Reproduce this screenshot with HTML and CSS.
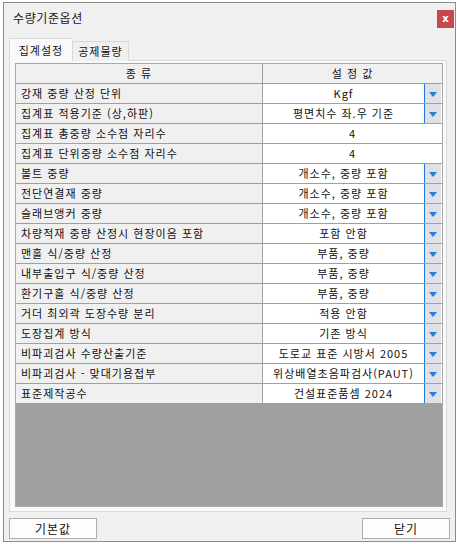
FILE: index.html
```html
<!DOCTYPE html>
<html lang="ko">
<head>
<meta charset="utf-8">
<title>수량기준옵션</title>
<link rel="stylesheet" href="styles.css">
</head>
<body>
<div class="window">
  <div class="titlebar">
    <span class="title">수량기준옵션</span>
    <div class="close">x</div>
  </div>
  <div class="tabs">
    <div class="tab active">집계설정</div>
    <div class="tab">공제물량</div>
  </div>
  <div class="panel">
    <div class="grid">
      <div class="row head"><div class="c1">종 류</div><div class="c2">설 정 값</div></div>
      <div class="row"><div class="c1">강재 중량 산정 단위</div><div class="c2"><span class="val">Kgf</span><span class="dd"><i></i></span></div></div>
      <div class="row"><div class="c1">집계표 적용기준 (상,하판)</div><div class="c2"><span class="val">평면치수 좌.우 기준</span><span class="dd"><i></i></span></div></div>
      <div class="row"><div class="c1">집계표 총중량 소수점 자리수</div><div class="c2"><span class="val">4</span></div></div>
      <div class="row"><div class="c1">집계표 단위중량 소수점 자리수</div><div class="c2"><span class="val">4</span></div></div>
      <div class="row"><div class="c1">볼트 중량</div><div class="c2"><span class="val">개소수, 중량 포함</span><span class="dd"><i></i></span></div></div>
      <div class="row"><div class="c1">전단연결재 중량</div><div class="c2"><span class="val">개소수, 중량 포함</span><span class="dd"><i></i></span></div></div>
      <div class="row"><div class="c1">슬래브앵커 중량</div><div class="c2"><span class="val">개소수, 중량 포함</span><span class="dd"><i></i></span></div></div>
      <div class="row"><div class="c1">차량적재 중량 산정시 현장이음 포함</div><div class="c2"><span class="val">포함 안함</span><span class="dd"><i></i></span></div></div>
      <div class="row"><div class="c1">맨홀 식/중량 산정</div><div class="c2"><span class="val">부품, 중량</span><span class="dd"><i></i></span></div></div>
      <div class="row"><div class="c1">내부출입구 식/중량 산정</div><div class="c2"><span class="val">부품, 중량</span><span class="dd"><i></i></span></div></div>
      <div class="row"><div class="c1">환기구홀 식/중량 산정</div><div class="c2"><span class="val">부품, 중량</span><span class="dd"><i></i></span></div></div>
      <div class="row"><div class="c1">거더 최외곽 도장수량 분리</div><div class="c2"><span class="val">적용 안함</span><span class="dd"><i></i></span></div></div>
      <div class="row"><div class="c1">도장집계 방식</div><div class="c2"><span class="val">기존 방식</span><span class="dd"><i></i></span></div></div>
      <div class="row"><div class="c1">비파괴검사 수량산출기준</div><div class="c2"><span class="val">도로교 표준 시방서 2005</span><span class="dd"><i></i></span></div></div>
      <div class="row"><div class="c1">비파괴검사 - 맞대기용접부</div><div class="c2"><span class="val">위상배열초음파검사(PAUT)</span><span class="dd"><i></i></span></div></div>
      <div class="row"><div class="c1">표준제작공수</div><div class="c2"><span class="val">건설표준품셈 2024</span><span class="dd"><i></i></span></div></div>
      <div class="empty"></div>
    </div>
  </div>
  <div class="footer">
    <div class="btn">기본값</div>
    <div class="btn">닫기</div>
  </div>
</div>
</body>
</html>
```
FILE: styles.css
```css
* { box-sizing: border-box; }
html, body { margin: 0; padding: 0; }
body {
  background: #ffffff;
  font-family: "Noto Sans CJK KR", "Noto Sans", sans-serif;
  font-size: 11px;
  letter-spacing: 1px;
  color: #111;
}
.window {
  margin: 2px 0 0 3px;
  width: 453px;
  height: 540px;
  border: 1px solid #8c8c8c;
  background: #f0f0f0;
  display: flex;
  flex-direction: column;
}
.titlebar {
  height: 35px;
  flex: none;
  display: flex;
  justify-content: space-between;
  align-items: flex-start;
  padding: 0 1px 0 9px;
}
.title {
  font-size: 12px;
  letter-spacing: 0.6px;
  line-height: 16px;
  margin-top: 7px;
  color: #1a1a1a;
}
.close {
  margin-top: 7px;
  width: 17px;
  height: 18px;
  background: #c8474a;
  color: #fff;
  font-family: "DejaVu Sans", sans-serif;
  font-weight: bold;
  font-size: 10px;
  letter-spacing: 0;
  line-height: 17px;
  text-align: center;
}
.tabs {
  display: flex;
  align-items: flex-end;
  padding-left: 5px;
  height: 23px;
  margin-bottom: -1px;
  position: relative;
  z-index: 1;
}
.tab {
  height: 20px;
  width: 57px;
  border: 1px solid #d9d9d9;
  border-bottom: none;
  background: #f0f0f0;
  text-align: center;
  line-height: 19px;
}
.tab.active {
  height: 23px;
  width: 63px;
  background: #f9f9f9;
  border-right: none;
  line-height: 22px;
}
.panel {
  margin-left: 5px;
  width: 438px;
  height: 452px;
  border: 1px solid #d9d9d9;
  background: #f9f9f9;
  padding: 2px 3px 4px 5px;
  flex: none;
}
.grid {
  height: 100%;
  border: 1px solid #a8a8a8;
  background: #a0a0a0;
  display: flex;
  flex-direction: column;
}
.row {
  display: flex;
  height: 20px;
  flex: none;
  border-bottom: 1px solid #a0a0a0;
}
.c1 {
  width: 247px;
  flex: none;
  background: #f0f0f0;
  border-right: 1px solid #a0a0a0;
  padding-left: 5px;
  line-height: 19px;
  white-space: nowrap;
}
.c2 {
  flex: 1;
  background: #fff;
  display: flex;
  line-height: 19px;
  white-space: nowrap;
}
.head .c1, .head .c2 {
  background: #f0f0f0;
  text-align: center;
  justify-content: center;
  padding-left: 0;
}
.val {
  flex: 1;
  text-align: center;
}
.dd {
  width: 17px;
  flex: none;
  border-left: 1px solid #1f78d1;
  background: #dfe1e7;
  margin-right: 1px;
  display: flex;
  align-items: center;
  justify-content: center;
}
.dd i {
  width: 0;
  height: 0;
  border-left: 4px solid transparent;
  border-right: 4px solid transparent;
  border-top: 5px solid #2a7bd5;
  margin-top: 1px;
}
.empty {
  flex: 1;
  background: #a0a0a0;
}
.footer {
  display: flex;
  justify-content: space-between;
  padding: 0 5px;
  margin-top: 6px;
}
.btn {
  width: 88px;
  height: 21px;
  border: 1px solid #adadad;
  background: #fdfdfd;
  text-align: center;
  line-height: 19px;
  font-size: 12px;
}
```
